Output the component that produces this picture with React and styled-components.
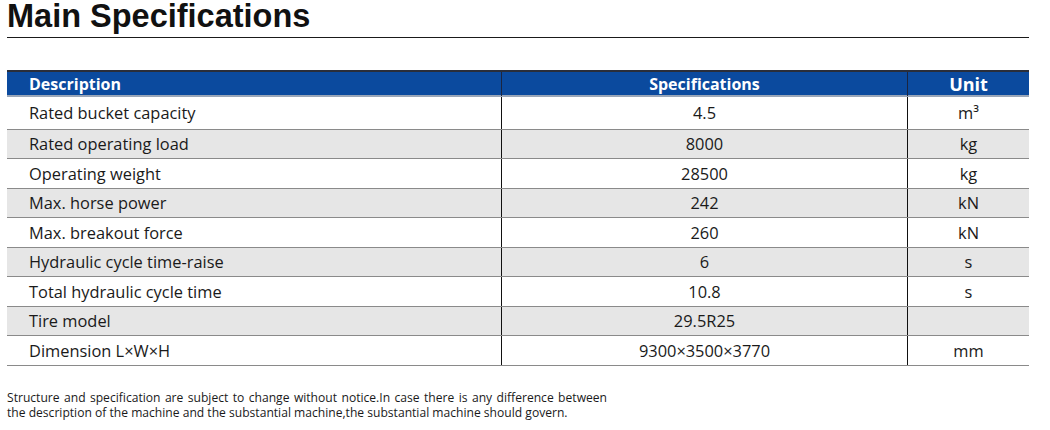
import React from 'react';
import styled, {createGlobalStyle} from 'styled-components';

const rows = [
  {desc: 'Rated bucket capacity', spec: '4.5', unit: 'm³'},
  {desc: 'Rated operating load', spec: '8000', unit: 'kg'},
  {desc: 'Operating weight', spec: '28500', unit: 'kg'},
  {desc: 'Max. horse power', spec: '242', unit: 'kN'},
  {desc: 'Max. breakout force', spec: '260', unit: 'kN'},
  {desc: 'Hydraulic cycle time-raise', spec: '6', unit: 's'},
  {desc: 'Total hydraulic cycle time', spec: '10.8', unit: 's'},
  {desc: 'Tire model', spec: '29.5R25', unit: ''},
  {desc: 'Dimension L×W×H', spec: '9300×3500×3770', unit: 'mm'},
];

export default function App() {
  return (
    <>
      <GlobalStyle />
      <Page>
        <Title>Main Specifications</Title>
        <Table>
          <HeadRow>
            <HeadCell>Description</HeadCell>
            <HeadCell $center>Specifications</HeadCell>
            <HeadCell $center $big>Unit</HeadCell>
          </HeadRow>
          {rows.map((row, i) => (
            <Row key={row.desc} $shaded={i % 2 === 1} $first={i === 0}>
              <Cell>{row.desc}</Cell>
              <Cell $center $divided>{row.spec}</Cell>
              <Cell $center $divided>{row.unit}</Cell>
            </Row>
          ))}
        </Table>
        <Note>
          <NoteLine $justify>
            Structure and specification are subject to change without notice.In case there is any difference between
          </NoteLine>
          <NoteLine>the description of the machine and the substantial machine,the substantial machine should govern.</NoteLine>
        </Note>
      </Page>
    </>
  );
}

const GlobalStyle = createGlobalStyle`
  body {
    margin: 0;
    background: #fff;
  }
`;

const Page = styled.div`
  width: 1050px;
  height: 430px;
  padding: 0 21px 0 7px;
  box-sizing: border-box;
  display: flex;
  flex-direction: column;
  font-family: 'Open Sans', 'Noto Sans', sans-serif;
  color: #1a1a1a;
`;

const Title = styled.h1`
  margin: 0;
  height: 38px;
  box-sizing: border-box;
  border-bottom: 1px solid #1a1a1a;
  font-family: 'Liberation Sans', Arial, sans-serif;
  font-weight: 700;
  font-size: 32.5px;
  line-height: 33px;
  color: #111;
`;

const Table = styled.div`
  margin-top: 32px;
  display: flex;
  flex-direction: column;
`;

const grid = `
  display: grid;
  grid-template-columns: 494px 406px 122px;
`;

const HeadRow = styled.div`
  ${grid}
  height: 27px;
  box-sizing: border-box;
  background: #0b4a9e;
  border-top: 2px solid #2a2e3a;
  border-bottom: 2px solid #9aa6b8;
`;

const HeadCell = styled.div`
  display: flex;
  align-items: center;
  justify-content: ${p => (p.$center ? 'center' : 'flex-start')};
  padding-left: ${p => (p.$center ? '0' : '22px')};
  color: #fff;
  font-weight: 700;
  font-size: ${p => (p.$big ? '18px' : '16px')};
  border-left: ${p => (p.$center ? '1px solid #1b2540' : 'none')};
`;

const Row = styled.div`
  ${grid}
  height: ${p => (p.$first ? '32.5px' : '29.5px')};
  box-sizing: border-box;
  background: ${p => (p.$shaded ? '#e6e6e6' : '#fff')};
  border-bottom: 1px solid #8a8a8a;
`;

const Cell = styled.div`
  display: flex;
  align-items: center;
  justify-content: ${p => (p.$center ? 'center' : 'flex-start')};
  padding-left: ${p => (p.$center ? '0' : '22px')};
  font-size: 16.4px;
  color: #1a1a1a;
  border-left: ${p => (p.$divided ? '1px solid #111' : 'none')};
`;

const Note = styled.div`
  margin-top: 24px;
  width: 600px;
  font-size: 12.1px;
  line-height: 15px;
  color: #1a1a1a;
`;

const NoteLine = styled.div`
  white-space: nowrap;
  text-align: ${p => (p.$justify ? 'justify' : 'left')};
  text-align-last: ${p => (p.$justify ? 'justify' : 'left')};
`;
